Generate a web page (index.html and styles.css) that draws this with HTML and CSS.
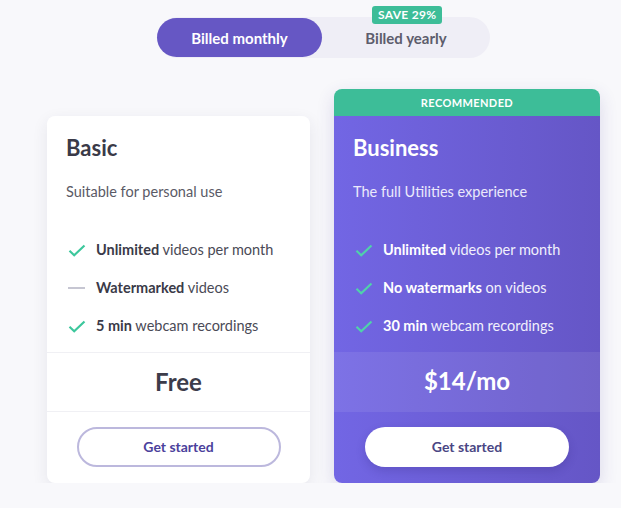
FILE: index.html
```html
<!DOCTYPE html>
<html lang="en">
<head>
    <meta charset="UTF-8">
    <meta name="viewport" content="width=device-width, initial-scale=1.0">
    <title>Pricing</title>
    <link rel="stylesheet" href="styles.css">
</head>
<body>
    <div class="page">
        <div class="toggle-row">
            <div class="toggle">
                <button class="toggle-btn active">Billed monthly</button>
                <button class="toggle-btn">
                    Billed yearly
                    <span class="save-badge">SAVE 29%</span>
                </button>
            </div>
        </div>

        <div class="plans">
            <div class="plan basic">
                <div class="plan-body">
                    <div class="plan-name">Basic</div>
                    <div class="plan-desc">Suitable for personal use</div>
                    <ul class="features">
                        <li><span class="icon check"><svg viewBox="0 0 18 13"><path d="M1.5 6.8 L6.2 11.2 L16.5 1.5" /></svg></span><span><b>Unlimited</b> videos per month</span></li>
                        <li><span class="icon dash"></span><span><b>Watermarked</b> videos</span></li>
                        <li><span class="icon check"><svg viewBox="0 0 18 13"><path d="M1.5 6.8 L6.2 11.2 L16.5 1.5" /></svg></span><span><b>5 min</b> webcam recordings</span></li>
                    </ul>
                </div>
                <div class="price">Free</div>
                <div class="plan-foot">
                    <button class="start-btn">Get started</button>
                </div>
            </div>

            <div class="plan business">
                <div class="ribbon">RECOMMENDED</div>
                <div class="plan-inner">
                    <div class="plan-body">
                        <div class="plan-name">Business</div>
                        <div class="plan-desc">The full Utilities experience</div>
                        <ul class="features">
                            <li><span class="icon check"><svg viewBox="0 0 18 13"><path d="M1.5 6.8 L6.2 11.2 L16.5 1.5" /></svg></span><span><b>Unlimited</b> videos per month</span></li>
                            <li><span class="icon check"><svg viewBox="0 0 18 13"><path d="M1.5 6.8 L6.2 11.2 L16.5 1.5" /></svg></span><span><b>No watermarks</b> on videos</span></li>
                            <li><span class="icon check"><svg viewBox="0 0 18 13"><path d="M1.5 6.8 L6.2 11.2 L16.5 1.5" /></svg></span><span><b>30 min</b> webcam recordings</span></li>
                        </ul>
                    </div>
                    <div class="price">$14/mo</div>
                    <div class="plan-foot">
                        <button class="start-btn">Get started</button>
                    </div>
                </div>
            </div>
        </div>
    </div>
</body>
</html>
```

FILE: styles.css
```css
* {
    margin: 0;
    padding: 0;
    box-sizing: border-box;
}
body {
    background: #f8f8fb;
    color: #3c3c4a;
    font-family: Lato, "Liberation Sans", sans-serif;
}
.page {
    width: 553px;
    margin-left: 47px;
    padding-top: 17px;
}
.toggle-row {
    display: flex;
    justify-content: center;
}
.toggle {
    display: flex;
    background: #efeef6;
    border-radius: 21px;
    height: 41px;
    padding: 1px 0;
}
.toggle-btn {
    position: relative;
    border: none;
    background: none;
    font-family: inherit;
    font-size: 15px;
    font-weight: 700;
    color: #5d5d6c;
    border-radius: 20px;
    cursor: pointer;
}
.toggle-btn:first-child {
    width: 165px;
}
.toggle-btn:last-child {
    width: 168px;
}
.toggle-btn.active {
    background: #6657c4;
    color: #fff;
}
.save-badge {
    position: absolute;
    top: -12px;
    left: 50px;
    background: #3dbd98;
    color: #fff;
    font-size: 12px;
    font-weight: 700;
    letter-spacing: 0.3px;
    padding: 1px 6px;
    border-radius: 3px;
    line-height: 16px;
}
.plans {
    display: flex;
    align-items: flex-end;
    gap: 24px;
    margin-top: 31px;
}
.plan {
    background: #fff;
    border-radius: 8px;
    box-shadow: 0 5px 16px rgba(40, 40, 80, 0.09);
    display: flex;
    flex-direction: column;
}
.basic {
    width: 263px;
    height: 367px;
}
.business {
    width: 266px;
    height: 394px;
    background: none;
    box-shadow: 0 6px 18px rgba(60, 50, 140, 0.16);
}
.ribbon {
    background: #3dbd98;
    color: #fff;
    text-align: center;
    font-size: 11px;
    font-weight: 700;
    letter-spacing: 0.4px;
    height: 27px;
    line-height: 27px;
    border-radius: 8px 8px 0 0;
}
.plan-inner {
    flex: 1;
    display: flex;
    flex-direction: column;
    background: linear-gradient(to right, #7266e4, #6556c6);
    border-radius: 0 0 8px 8px;
    color: #fff;
}
.plan-body {
    padding: 18px 19px 0;
    height: 236px;
}
.plan-name {
    font-size: 22px;
    font-weight: 700;
    line-height: 28px;
    color: #3a3a48;
}
.plan-desc {
    font-size: 14.5px;
    line-height: 20px;
    margin-top: 20px;
    color: #5a5a66;
}
.features {
    list-style: none;
    margin-top: 38px;
}
.features li {
    display: flex;
    align-items: center;
    font-size: 14.5px;
    line-height: 20px;
    margin-bottom: 18px;
    color: #4a4a56;
}
.features b {
    font-weight: 700;
    color: #3a3a48;
}
.icon {
    width: 18px;
    height: 13px;
    margin-left: 2px;
    margin-right: 10px;
    display: flex;
    align-items: center;
}
.icon svg {
    width: 18px;
    height: 13px;
    fill: none;
    stroke: #3cc79c;
    stroke-width: 2.2;
}
.dash::before {
    content: "";
    display: block;
    width: 17px;
    height: 2px;
    background: #c6c6d2;
}
.price {
    height: 60px;
    line-height: 58px;
    text-align: center;
    font-size: 24px;
    font-weight: 700;
    color: #3c3c4a;
    border-top: 1px solid #f0f0f4;
    border-bottom: 1px solid #f0f0f4;
}
.plan-foot {
    flex: 1;
    display: flex;
    justify-content: center;
    align-items: center;
    padding-bottom: 2px;
}
.start-btn {
    width: 204px;
    height: 40px;
    border-radius: 20px;
    border: 2px solid #bcb8dd;
    background: #fff;
    color: #4b419c;
    font-family: inherit;
    font-size: 14px;
    font-weight: 700;
    cursor: pointer;
}
.business .plan-name,
.business .features b {
    color: #fff;
}
.business .plan-desc {
    color: #ebe9fb;
}
.business .features li {
    color: #f1f0fc;
}
.business .icon svg {
    stroke: #4fd2aa;
}
.business .price {
    color: #fff;
    border: none;
    background: rgba(255, 255, 255, 0.08);
}
.business .start-btn {
    border: none;
    color: #4a4684;
    box-shadow: 0 4px 10px rgba(40, 30, 110, 0.2);
}
```
